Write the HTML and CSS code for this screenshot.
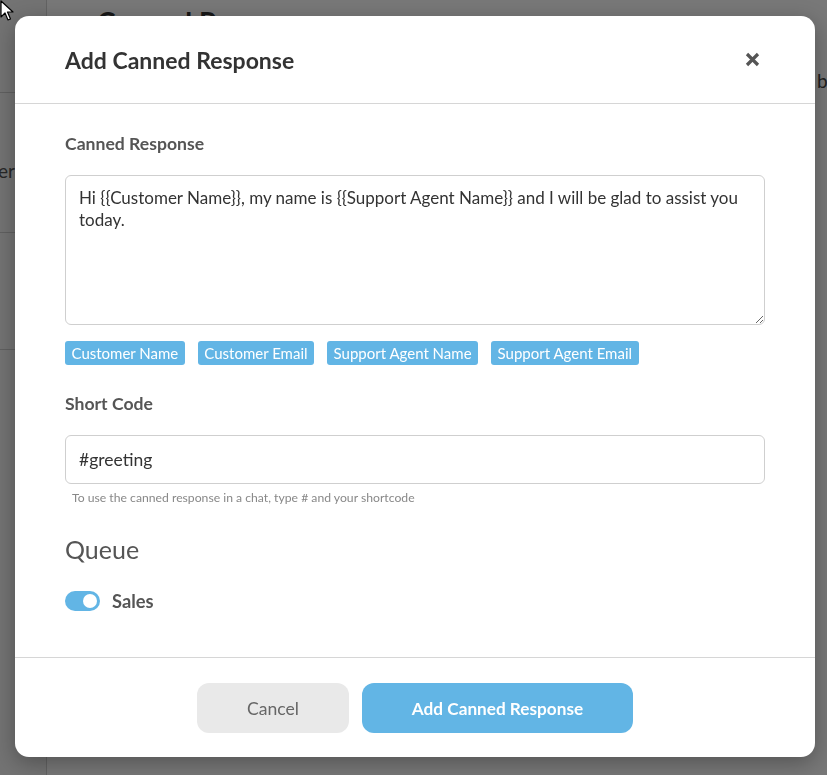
FILE: index.html
```html
<!DOCTYPE html>
<html>
<head>
  <title>Canned Responses</title>
  <meta name="viewport" content="width=device-width,initial-scale=1.0">
  <link rel="stylesheet" href="styles.css">
</head>
<body>

  <div class="page">
    <div class="sidebar">
      <div class="side-item side-top"></div>
      <div class="side-item side-tall"><span>er</span></div>
      <div class="side-item side-mid"></div>
      <div class="side-item side-last"></div>
    </div>
    <div class="main">
      <div class="main-head">
        <h1>Canned Responses</h1>
      </div>
      <div class="main-tabs">
        <span>bar</span>
      </div>
    </div>
  </div>

  <div class="overlay"></div>

  <div class="modal">
    <div class="modal-header">
      <h2>Add Canned Response</h2>
      <button class="close" aria-label="Close">
        <svg width="15" height="15" viewBox="0 0 15 15">
          <path d="M2 2 L13 13 M13 2 L2 13" stroke="#555" stroke-width="3.2" stroke-linecap="butt"/>
        </svg>
      </button>
    </div>

    <div class="modal-body">
      <label class="field-label">Canned Response</label>
      <textarea class="text-area">Hi {{Customer Name}}, my name is {{Support Agent Name}} and I will be glad to assist you today.</textarea>

      <div class="tags">
        <span class="tag">Customer Name</span>
        <span class="tag">Customer Email</span>
        <span class="tag">Support Agent Name</span>
        <span class="tag">Support Agent Email</span>
      </div>

      <label class="field-label short-label">Short Code</label>
      <input class="text-input" type="text" value="#greeting">
      <p class="help">To use the canned response in a chat, type # and your shortcode</p>

      <h3 class="queue-title">Queue</h3>
      <div class="queue-row">
        <span class="switch"><span class="knob"></span></span>
        <span class="queue-name">Sales</span>
      </div>
    </div>

    <div class="modal-footer">
      <button class="btn btn-cancel">Cancel</button>
      <button class="btn btn-primary">Add Canned Response</button>
    </div>
  </div>

  <svg class="cursor" width="14" height="22" viewBox="0 0 14 22">
    <path d="M1 1 L1 17 L5 13 L8 20 L10.5 19 L7.5 12 L13 12 Z" fill="#fff" stroke="#000" stroke-width="1.2" stroke-linejoin="round"/>
  </svg>

</body>
</html>
```

FILE: styles.css
```css
  body{
    margin: 0;
    font-family: 'Lato', 'Liberation Sans', sans-serif;
    background-color: #fff;
    height: 775px;
    overflow: hidden;
  }

  /* page behind the modal */
  .page{
    display: flex;
    height: 775px;
  }

  .sidebar{
    width: 46px;
    flex-shrink: 0;
    background-color: #f0f0f0;
    border-right: 1px solid #cfcfcf;
    overflow: hidden;
  }

  .side-item{
    height: 139px;
    border-bottom: 1px solid #c8c8c8;
    white-space: nowrap;
  }
  .side-top{
    height: 92px;
  }
  .side-mid{
    height: 116px;
  }
  .side-last{
    border-bottom: none;
  }
  .side-tall span{
    display: block;
    padding-top: 66px;
    font-size: 19px;
    color: #555;
    margin-left: -2px;
  }

  .main{
    flex: 1;
    min-width: 0;
    overflow: hidden;
    background-color: #fafafa;
  }

  .main-head h1{
    margin: 0;
    padding: 5px 0 0 50px;
    font-size: 28px;
    font-weight: 700;
    color: #333;
    white-space: nowrap;
  }

  .main-tabs{
    padding: 30px 0 0 770px;
    font-size: 19px;
    color: #444;
    white-space: nowrap;
  }

  .overlay{
    position: fixed;
    inset: 0;
    background-color: rgba(0, 0, 0, 0.52);
  }

  /* modal */
  .modal{
    position: absolute;
    left: 15px;
    top: 16px;
    width: 800px;
    height: 741px;
    background-color: #fff;
    border-radius: 14px;
    box-shadow: 0 6px 22px rgba(0, 0, 0, 0.3);
    display: flex;
    flex-direction: column;
  }

  .modal-header{
    height: 88px;
    box-sizing: border-box;
    border-bottom: 1px solid #d6d6d6;
    display: flex;
    align-items: center;
    justify-content: space-between;
    padding: 0 55px 0 50px;
  }

  .modal-header h2{
    margin: 0;
    font-size: 23px;
    font-weight: 700;
    color: #333;
  }

  .close{
    border: none;
    background: none;
    padding: 0;
    width: 15px;
    height: 15px;
    cursor: pointer;
    display: flex;
  }

  .modal-body{
    flex: 1;
    padding: 30px 50px 0 50px;
    display: flex;
    flex-direction: column;
    align-items: flex-start;
  }

  .field-label{
    font-size: 17.6px;
    line-height: 20px;
    font-weight: 700;
    color: #555;
    margin-bottom: 21px;
  }
  .short-label{
    margin-top: 29px;
  }

  .text-area{
    width: 700px;
    height: 150px;
    box-sizing: border-box;
    border: 1px solid #cfcfcf;
    border-radius: 6px;
    padding: 11px 13px;
    font-family: 'Lato', 'Liberation Sans', sans-serif;
    font-size: 17px;
    line-height: 22px;
    color: #333;
    resize: vertical;
    margin: 0;
  }

  .tags{
    display: flex;
    gap: 13px;
    margin-top: 16px;
  }

  .tag{
    background-color: #62b5e5;
    color: #fff;
    font-size: 15px;
    line-height: 24px;
    height: 24px;
    padding: 0 6.5px;
    border-radius: 3px;
  }

  .text-input{
    width: 700px;
    height: 49px;
    box-sizing: border-box;
    border: 1px solid #cfcfcf;
    border-radius: 6px;
    padding: 0 13px;
    font-family: 'Lato', 'Liberation Sans', sans-serif;
    font-size: 17.5px;
    color: #333;
    margin: 0;
  }

  .help{
    margin: 7px 0 0 7px;
    font-size: 12.2px;
    line-height: 14px;
    color: #888;
  }

  .queue-title{
    margin: 30px 0 0 0;
    font-size: 25px;
    line-height: 28px;
    font-weight: 400;
    color: #555;
  }

  .queue-row{
    display: flex;
    align-items: center;
    gap: 12px;
    margin-top: 27px;
  }

  .switch{
    width: 35px;
    height: 20px;
    border-radius: 10px;
    background-color: #62b5e5;
    display: flex;
    align-items: center;
    justify-content: flex-end;
    padding: 0 3px;
    box-sizing: border-box;
  }
  .knob{
    width: 14px;
    height: 14px;
    border-radius: 50%;
    background-color: #fff;
  }

  .queue-name{
    font-size: 18.3px;
    line-height: 22px;
    font-weight: 700;
    color: #555;
  }

  .modal-footer{
    height: 100px;
    box-sizing: border-box;
    border-top: 1px solid #d6d6d6;
    display: flex;
    justify-content: center;
    align-items: flex-start;
    gap: 13px;
    padding-top: 25px;
  }

  .btn{
    height: 50px;
    border: none;
    border-radius: 12px;
    font-family: 'Lato', 'Liberation Sans', sans-serif;
    font-size: 17.6px;
    cursor: pointer;
  }
  .btn-cancel{
    width: 152px;
    background-color: #e9e9e9;
    color: #666;
  }
  .btn-primary{
    width: 271px;
    background-color: #62b5e5;
    color: #fff;
    font-weight: 700;
    font-size: 17.2px;
  }

  .cursor{
    position: absolute;
    left: 0;
    top: 0;
  }
```
